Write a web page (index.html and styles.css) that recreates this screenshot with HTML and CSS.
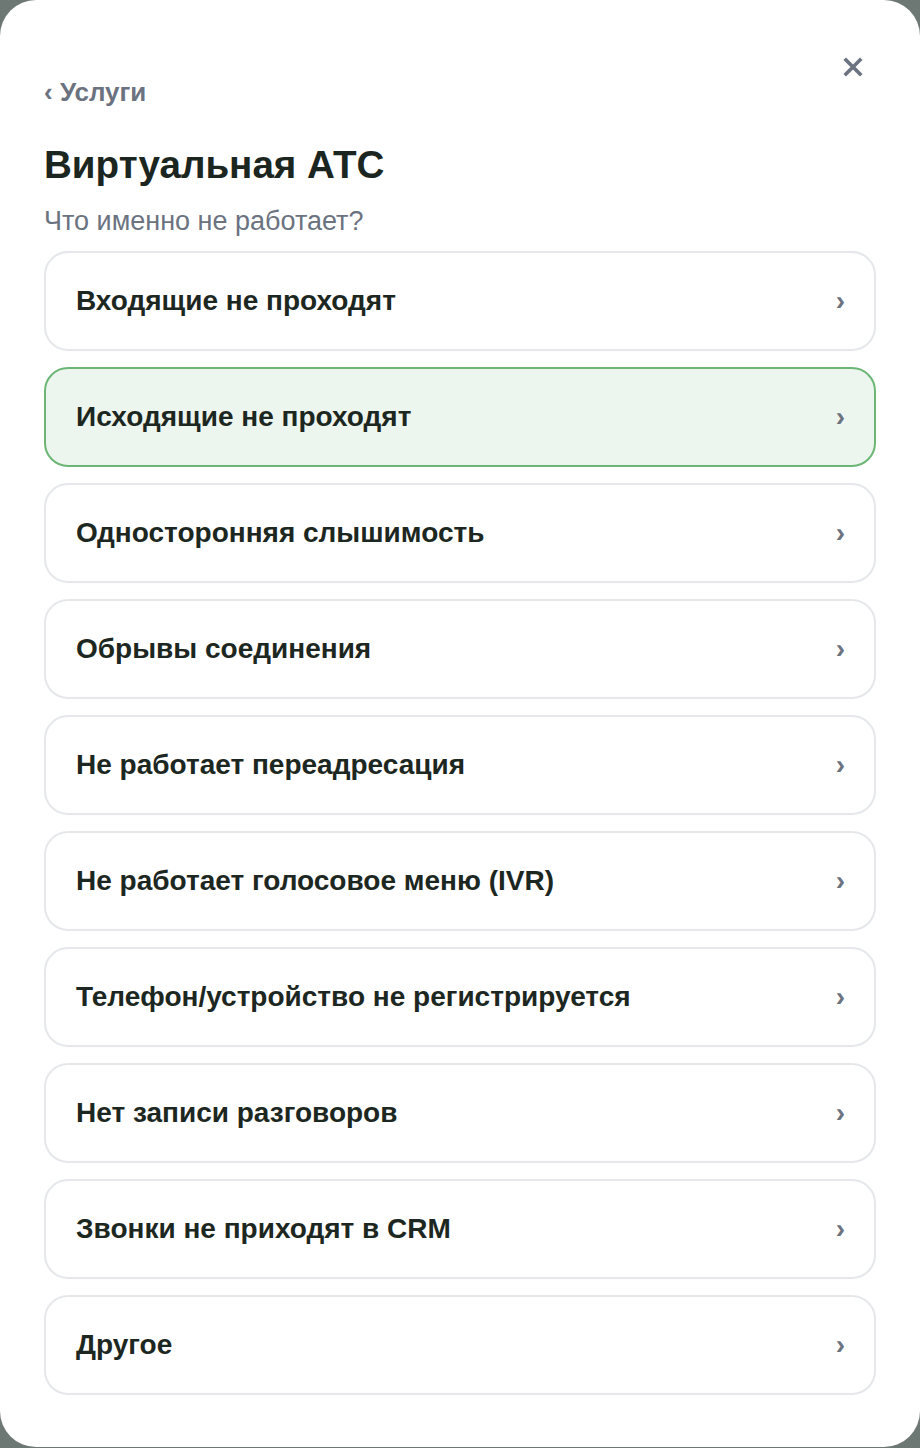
FILE: index.html
```html
<!DOCTYPE html>
<html lang="ru">
<head>
<meta charset="utf-8">
<title>Виртуальная АТС</title>
<link rel="stylesheet" href="styles.css">
</head>
<body>
<div class="sheet">
  <button class="close" type="button" aria-label="Закрыть">
    <svg viewBox="0 0 20 20" width="20" height="20"><path d="M3 3 L17 17 M17 3 L3 17" stroke="currentColor" stroke-width="3.6" stroke-linecap="square" fill="none"/></svg>
  </button>
  <a class="back" href="#">‹ Услуги</a>
  <h1 class="title">Виртуальная АТС</h1>
  <p class="subtitle">Что именно не работает?</p>
  <ul class="options">
    <li class="option"><span>Входящие не проходят</span><span class="chev">›</span></li>
    <li class="option is-active"><span>Исходящие не проходят</span><span class="chev">›</span></li>
    <li class="option"><span>Односторонняя слышимость</span><span class="chev">›</span></li>
    <li class="option"><span>Обрывы соединения</span><span class="chev">›</span></li>
    <li class="option"><span>Не работает переадресация</span><span class="chev">›</span></li>
    <li class="option"><span>Не работает голосовое меню (IVR)</span><span class="chev">›</span></li>
    <li class="option"><span>Телефон/устройство не регистрируется</span><span class="chev">›</span></li>
    <li class="option"><span>Нет записи разговоров</span><span class="chev">›</span></li>
    <li class="option"><span>Звонки не приходят в CRM</span><span class="chev">›</span></li>
    <li class="option"><span>Другое</span><span class="chev">›</span></li>
  </ul>
</div>
</body>
</html>
```
FILE: styles.css
```css
html, body {
  margin: 0;
  padding: 0;
}

body {
  background: #6d7773;
  font-family: "Liberation Sans", Arial, sans-serif;
  color: #1d2721;
}

.sheet {
  position: relative;
  box-sizing: border-box;
  width: 920px;
  height: 1447px;
  background: #ffffff;
  border-radius: 36px;
  padding: 78px 44px 52px;
  display: flex;
  flex-direction: column;
}

.close {
  position: absolute;
  top: 57px;
  right: 57px;
  width: 20px;
  height: 20px;
  padding: 0;
  border: 0;
  background: none;
  color: #6b7280;
  display: flex;
}

.back {
  align-self: flex-start;
  font-size: 26px;
  font-weight: 700;
  line-height: 28px;
  color: #6b7280;
  text-decoration: none;
}

.title {
  margin: 36px 0 0;
  font-size: 38.6px;
  line-height: 46px;
  font-weight: 700;
  color: #1c2620;
}

.subtitle {
  margin: 17px 0 0;
  font-size: 27px;
  line-height: 32px;
  color: #6b7280;
}

.options {
  list-style: none;
  margin: 14px 0 0;
  padding: 0;
  display: flex;
  flex-direction: column;
  gap: 16px;
}

.option {
  box-sizing: border-box;
  height: 100px;
  display: flex;
  align-items: center;
  justify-content: space-between;
  padding: 0 29px 0 30px;
  border: 2px solid #e5e7eb;
  border-radius: 24px;
  background: #ffffff;
  font-size: 28px;
  font-weight: 700;
  color: #1d2721;
}

.option.is-active {
  background: #edf6ee;
  border-color: #6cb675;
}

.chev {
  font-size: 28px;
  font-weight: 700;
  color: #6b7280;
  line-height: 1;
}
```
